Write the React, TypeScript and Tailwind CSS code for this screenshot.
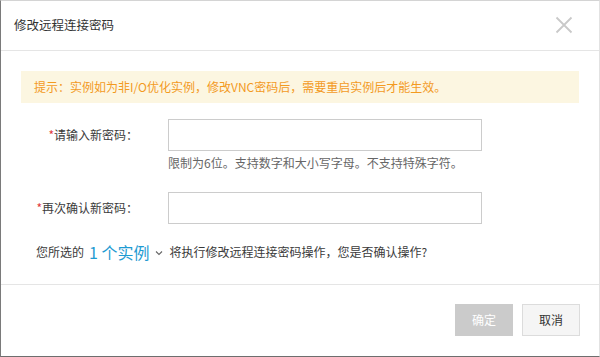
import React from "react";

const font = { fontFamily: '"Noto Sans CJK SC", "Noto Sans", sans-serif' };

export default function App() {
  return (
    <div
      className="w-[600px] h-[357px] bg-white flex flex-col border-l border-b border-l-[#7a7a7a] border-b-[#6e6e6e] border-t border-t-[#d4d4d4] border-r border-r-[#e2e2e2] text-[12px] text-[#3a3a3a]"
      style={font}
    >
      {/* header */}
      <div className="h-[50px] shrink-0 flex items-center justify-between pl-[13px] pr-[26px] border-b border-[#e5e5e5]">
        <span className="text-[12.5px] text-[#333] leading-none">修改远程连接密码</span>
        <svg width="18" height="18" viewBox="0 0 18 18" className="mt-[-1px]">
          <path d="M1.5 1.5 L16.5 16.5 M16.5 1.5 L1.5 16.5" stroke="#c9c9c9" strokeWidth="1.8" fill="none" />
        </svg>
      </div>

      {/* body */}
      <div className="flex-1 flex flex-col px-[20px] pt-[20px]">
        <div className="h-[32px] bg-[#fcf6e1] flex items-center pl-[13px] text-[#f39a1f] leading-none">
          提示：实例如为非I/O优化实例，修改VNC密码后，需要重启实例后才能生效。
        </div>

        <div className="mt-[16px] flex items-start">
          <div className="w-[117px] h-[32px] flex items-center justify-end">
            <span className="text-[#e0393e]">*</span>
            <span>请输入新密码：</span>
          </div>
          <div className="ml-[30px] flex flex-col">
            <div className="w-[314px] h-[32px] border border-[#cccccc] bg-white" />
            <div className="leading-[20px] text-[#666] mt-[2px]">
              限制为6位。支持数字和大小写字母。不支持特殊字符。
            </div>
          </div>
        </div>

        <div className="mt-[19px] flex items-start">
          <div className="w-[117px] h-[32px] flex items-center justify-end">
            <span className="text-[#e0393e]">*</span>
            <span>再次确认新密码：</span>
          </div>
          <div className="ml-[30px]">
            <div className="w-[314px] h-[32px] border border-[#cccccc] bg-white" />
          </div>
        </div>

        <div className="mt-[16px] h-[24px] flex items-center pl-[15px]">
          <span>您所选的</span>
          <span className="ml-[5px] text-[16px] text-[#1f9bd2] leading-none">1 个实例</span>
          <svg width="8" height="6" viewBox="0 0 8 6" className="ml-[6px] mt-[1px]">
            <path d="M1 1.5 L4 4.5 L7 1.5" stroke="#666" strokeWidth="1.1" fill="none" />
          </svg>
          <span className="ml-[6px]">将执行修改远程连接密码操作，您是否确认操作?</span>
        </div>
      </div>

      {/* footer */}
      <div className="h-[72px] shrink-0 border-t border-[#e5e5e5] flex items-start justify-end pt-[19px] pr-[19px] gap-[9px]">
        <button className="w-[58px] h-[32px] bg-[#cbcbcb] text-white text-[12px] flex items-center justify-center">
          确定
        </button>
        <button className="w-[58px] h-[32px] bg-[#f5f5f5] border border-[#dcdcdc] text-[#333] text-[12px] flex items-center justify-center">
          取消
        </button>
      </div>
    </div>
  );
}
